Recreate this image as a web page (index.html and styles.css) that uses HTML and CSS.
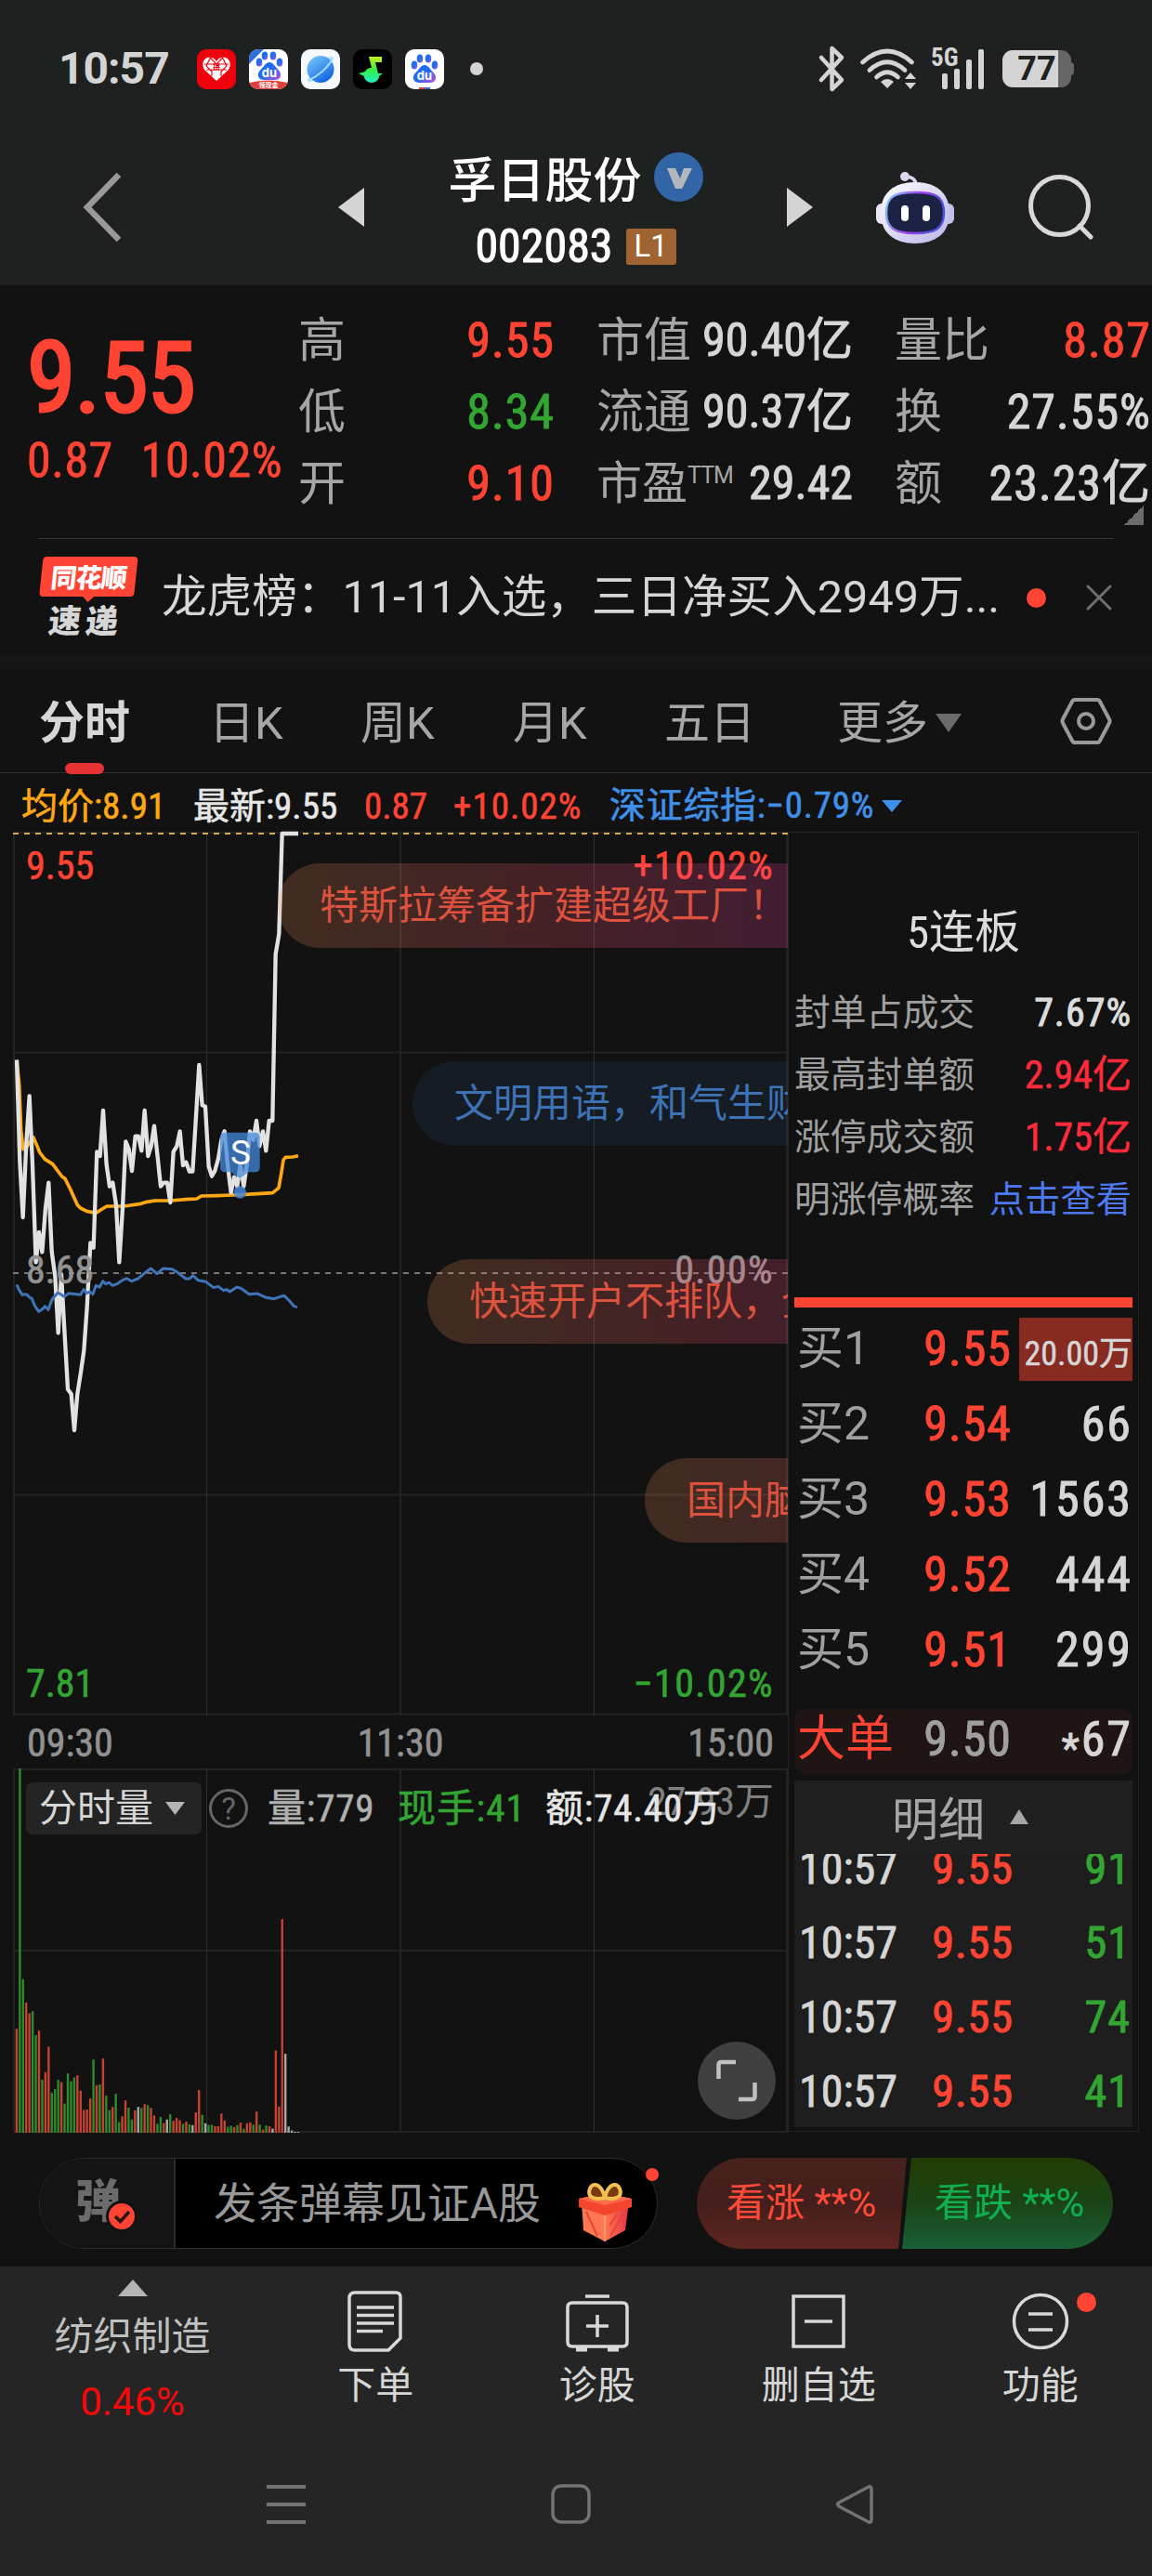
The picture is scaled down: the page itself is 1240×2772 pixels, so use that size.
FILE: index.html
```html
<!DOCTYPE html>
<html lang="zh-CN">
<head>
  <meta charset="UTF-8">
  <meta name="viewport" content="width=device-width, initial-scale=1.0">
  <title>孚日股份 002083</title>
  <link rel="stylesheet" href="styles.css">
</head>
<body>
  <svg class="defs" width="0" height="0">
    <defs>
      <linearGradient id="paw" x1="0" y1="0" x2="1" y2="1">
        <stop offset="0.5" stop-color="#1f6cf0"/>
        <stop offset="1" stop-color="#c34ddc"/>
      </linearGradient>
      <linearGradient id="planet" x1="0" y1="0" x2="0.7" y2="1">
        <stop offset="0" stop-color="#7fd0ff"/>
        <stop offset="1" stop-color="#0f62e0"/>
      </linearGradient>
      <linearGradient id="note" x1="0" y1="0" x2="0" y2="1">
        <stop offset="0" stop-color="#c6f01c"/>
        <stop offset="0.5" stop-color="#38f03c"/>
        <stop offset="1" stop-color="#19f0c8"/>
      </linearGradient>
      <linearGradient id="robotHead" x1="0" y1="0" x2="1" y2="1">
        <stop offset="0" stop-color="#ffffff"/>
        <stop offset="1" stop-color="#b9b4e6"/>
      </linearGradient>
      <linearGradient id="robotRim" x1="0" y1="0" x2="1" y2="0.3">
        <stop offset="0" stop-color="#7fd4f5"/>
        <stop offset="0.6" stop-color="#a03df0"/>
        <stop offset="1" stop-color="#4a52e0"/>
      </linearGradient>
      <linearGradient id="giftBox" x1="0" y1="0" x2="1" y2="0">
        <stop offset="0" stop-color="#ff7a4c"/>
        <stop offset="1" stop-color="#e8304a"/>
      </linearGradient>
      <symbol id="pawShape" viewBox="0 0 42 42">
        <g fill="url(#paw)">
          <ellipse cx="10" cy="17" rx="3.3" ry="4.5"/>
          <ellipse cx="16" cy="10" rx="3.3" ry="4.6"/>
          <ellipse cx="25" cy="10" rx="3.3" ry="4.6"/>
          <ellipse cx="32" cy="17" rx="3.3" ry="4.5"/>
          <path d="M21 17c4 0 5.500 4 8.500 7 3 3 4.500 5.500 3 9-1.500 3.500-6 3-11.500 3s-10 .5-11.500-3c-1.500-3.500 0-6 3-9 3-3 4.500-7 8.500-7z"/>
        </g>
        <text x="21" y="33" text-anchor="middle" class="du">du</text>
      </symbol>
    </defs>
  </svg>

  <div class="statusbar">
    <span class="clock">10:57</span>
    <div class="apps">
      <svg width="42" height="43" viewBox="0 0 42 43">
        <rect width="42" height="43" rx="10" fill="#f0000c"/>
        <path d="M21 34L8 22c-3-5-2-11 3-13 4-1 8 0 10 4 2-4 6-5 10-4 5 2 6 8 3 13z" fill="#fff"/>
        <path d="M8 16l26 0M10 22l22 0M14 10l-4 8 6 6 0 5M28 10l4 8-6 6 0 5M14 9l7 7 7-7" fill="none" stroke="#f0000c" stroke-width="1.200"/>
        <text x="21" y="22" text-anchor="middle" class="mini-red">拼</text>
      </svg>
      <svg width="42" height="43" viewBox="0 0 42 43">
        <defs><clipPath id="clipA"><rect width="42" height="43" rx="10"/></clipPath></defs>
        <g clip-path="url(#clipA)">
          <rect width="42" height="43" fill="#fff"/>
          <use href="#pawShape" x="1" y="-3" width="42" height="42"/>
          <path d="M0 0h16L0 16z" fill="#2f6fe0"/>
          <path d="M0 36q21-5 42 0v8H0z" fill="#e2403c"/>
          <text x="21" y="41" text-anchor="middle" class="mini-white">领现金</text>
        </g>
      </svg>
      <svg width="42" height="43" viewBox="0 0 42 43">
        <rect width="42" height="43" rx="10" fill="#f6f9fc"/>
        <ellipse cx="21" cy="21.500" rx="19" ry="5" transform="rotate(-45 21 21.500)" fill="#b9e4fb"/>
        <circle cx="21" cy="21.500" r="14.500" fill="url(#planet)"/>
        <path d="M9 33C18 29 29 20 34 10" stroke="#9fdcff" stroke-width="2" fill="none"/>
      </svg>
      <svg width="42" height="43" viewBox="0 0 42 43">
        <rect width="42" height="43" rx="10" fill="#000"/>
        <path d="M17 8h14v6h-7l3 12 5 0-4 3c0 4-4 7-8 7s-8-3-8-7l-6-3 7-2c1-2 3-4 7-4z" fill="url(#note)"/>
      </svg>
      <svg width="42" height="43" viewBox="0 0 42 43">
        <rect width="42" height="43" rx="10" fill="#fff"/>
        <use href="#pawShape" width="42" height="42"/>
        <rect x="15" y="41" width="6" height="2" fill="#e03c3c"/>
        <rect x="21" y="41" width="6" height="2" fill="#2f6fe0"/>
      </svg>
    </div>
    <i class="more-dot"></i>
    <div class="signals">
      <svg width="27" height="52" viewBox="0 0 27 52"><path d="M2 14l22 24-10.500 10V4L24 14 2 38" fill="none" stroke="#d4d4d4" stroke-width="4.500" stroke-linejoin="round" stroke-linecap="round"/></svg>
      <svg width="60" height="44" viewBox="0 0 60 44">
        <g fill="none" stroke="#d4d4d4" stroke-width="4.800" stroke-linecap="round">
          <path d="M2.500 15Q29 -9 55.500 15"/>
          <path d="M10 23.500Q29 6 48 23.500"/>
          <path d="M17.500 31Q29 20.500 40.500 31"/>
        </g>
        <path d="M22 36q7-6 14 0l-7 7z" fill="#d4d4d4"/>
        <path d="M54 26l6 7H48zM54 44l6-7H48z" fill="#d4d4d4"/>
      </svg>
      <svg width="57" height="44" viewBox="0 0 57 44">
        <text x="-1" y="19" class="net">5G</text>
        <g fill="#d4d4d4">
          <rect x="11" y="27" width="6" height="17" rx="2"/>
          <rect x="24" y="22" width="6" height="22" rx="2"/>
          <rect x="37" y="12" width="6" height="32" rx="2"/>
          <rect x="50" y="1" width="6" height="43" rx="2"/>
        </g>
      </svg>
      <div class="battery">77</div>
    </div>
  </div>

  <header class="header">
    <svg class="back" width="42" height="76" viewBox="0 0 42 76"><path d="M38 3L4 38l34 35" fill="none" stroke="#999" stroke-width="6.500"/></svg>
    <svg class="prev" width="28" height="42"><path d="M28 0v42L0 21z" fill="#d4d4d4"/></svg>
    <div class="stock">
      <div class="stock-name">孚日股份
        <svg width="53" height="53" viewBox="0 0 53 53"><circle cx="26.500" cy="26.500" r="26.500" fill="#3265a8"/><path d="M14 17h9l5 11 4-11h9L30 39h-7z" fill="#b4b8bc"/></svg>
      </div>
      <div class="stock-code">002083<span class="level">L1</span></div>
    </div>
    <svg class="next" width="28" height="42"><path d="M0 0v42L28 21z" fill="#d4d4d4"/></svg>
    <svg class="robot" width="84" height="77" viewBox="0 0 84 77">
      <path d="M31 5q12 0 12 10" fill="none" stroke="#dcd8f2" stroke-width="3.500"/>
      <circle cx="31" cy="5" r="5" fill="#dcd8f2"/>
      <rect x="0" y="34" width="14" height="22" rx="6" fill="#e9e6fa"/>
      <rect x="70" y="34" width="14" height="22" rx="6" fill="#c3bfea"/>
      <path d="M42 11c22 0 37 11 37 33S64 77 42 77 5 66 5 44s15-33 37-33z" fill="url(#robotHead)"/>
      <path d="M42 22c22 0 31 4 31 22S62 66 42 66 11 62 11 44s9-22 31-22z" fill="#1c2244" stroke="url(#robotRim)" stroke-width="2.500"/>
      <rect x="27" y="36" width="8" height="17" rx="4" fill="#fff"/>
      <rect x="50" y="36" width="8" height="17" rx="4" fill="#fff"/>
    </svg>
    <svg class="search" width="70" height="70" viewBox="0 0 70 70"><circle cx="33.500" cy="33.500" r="31" fill="none" stroke="#d8d8d8" stroke-width="5"/><path d="M55 55l12 12" stroke="#d8d8d8" stroke-width="5" stroke-linecap="round"/></svg>
  </header>

  <section class="quote">
    <div class="quote-main">
      <div class="price">9.55</div>
      <div class="change"><span>0.87</span><span>10.02%</span></div>
    </div>
    <ul class="quote-col">
      <li>高<b class="up">9.55</b></li>
      <li>低<b class="down">8.34</b></li>
      <li>开<b class="up">9.10</b></li>
    </ul>
    <ul class="quote-col worth">
      <li>市值<b>90.40亿</b></li>
      <li>流通<b>90.37亿</b></li>
      <li><span>市盈<sup>TTM</sup></span><b>29.42</b></li>
    </ul>
    <ul class="quote-col">
      <li>量比<b class="up">8.87</b></li>
      <li>换<b>27.55%</b></li>
      <li>额<b>23.23亿</b></li>
    </ul>
    <i class="corner"></i>
  </section>

  <section class="news">
    <div class="news-logo"><span class="bubble">同花顺</span><span class="express">速递</span></div>
    <p>龙虎榜：11-11入选，三日净买入2949万...</p>
    <i class="dot"></i>
    <svg width="28" height="28" viewBox="0 0 28 28"><path d="M2 2l24 24M26 2L2 26" stroke="#707070" stroke-width="3" stroke-linecap="round"/></svg>
  </section>

  <nav class="tabs">
    <span class="active">分时</span>
    <span>日K</span>
    <span>周K</span>
    <span>月K</span>
    <span>五日</span>
    <span>更多<svg width="28" height="22"><path d="M0 0h28L14 20z" fill="#6b6b6b"/></svg></span>
    <svg width="56" height="52" viewBox="0 0 56 52"><path d="M16 3h24q2 0 3 2l10 19q1 2 0 4L43 47q-1 2-3 2H16q-2 0-3-2L3 28q-1-2 0-4L13 5q1-2 3-2z" fill="none" stroke="#999" stroke-width="4"/><circle cx="28" cy="26" r="8" fill="none" stroke="#999" stroke-width="4"/></svg>
  </nav>

  <div class="legend">
    <span class="avg">均价:8.91</span>
    <span class="last">最新:9.55</span>
    <span class="up">0.87</span>
    <span class="up">+10.02%</span>
    <span class="index">深证综指:−0.79%<svg width="22" height="13"><path d="M0 0h22L11 13z" fill="#4090e8"/></svg></span>
  </div>

  <main class="board">
    <div class="charts">
      <div class="chart">
        <svg width="834" height="951" viewBox="0 0 834 951">
          <path class="grid" d="M1 1H834M1 0V951M833 0V951M417 0V951M0 237.500H834M0 713.500H834M0 949.500H834"/>
          <path class="grid thin" d="M208.500 0V951M625.500 0V951"/>
          <path d="M0 475H834" stroke="#999" stroke-width="1.500" stroke-dasharray="6 6"/>
          <path d="M0 2H834" stroke="#d6a963" stroke-width="2" stroke-dasharray="6 6"/>
          <g transform="translate(-14 225) scale(0.33333)" fill="none" stroke-linejoin="round">
            <polyline stroke="#ffa812" stroke-width="11" points="54,62 62,140 68,290 75,350 85,345 95,328 108,312 118,335 128,360 145,382 170,398 200,438 210,445 230,485 250,530 260,540 280,550 310,556 330,543 345,534 400,534 450,527 475,520 500,516 550,516 600,512 635,510 650,501 700,500 750,498 830,494 880,491 900,475 908,430 915,385 922,376 945,375 963,371"/>
            <polyline stroke="#e2e2e2" stroke-width="13" points="54,62 64,390 74,570 85,330 95,178 105,400 116,715 126,618 136,682 147,540 157,458 167,680 178,760 188,943 198,755 209,950 219,1125 230,1140 240,1257 250,1140 261,1070 271,1000 281,860 292,652 302,668 313,358 323,372 333,225 344,400 354,470 364,458 375,530 385,715 396,540 406,325 416,350 426,420 437,308 447,308 457,355 467,225 478,372 488,340 498,275 509,375 519,470 529,458 540,458 550,522 560,358 571,340 581,292 591,402 601,392 612,422 622,422 632,260 643,78 653,208 663,212 674,405 684,437 694,420 705,380 715,320 725,292 735,400 746,490 756,440 766,470 776,400 787,470 797,400 807,292 818,320 828,258 838,340 849,292 859,355 869,258 880,258 890,-279 901,-345 911,-669 963,-669"/>
            <polyline stroke="#3f74b8" stroke-width="9" points="54,787 62,805 72,820 85,818 95,828 103,832 112,855 125,874 137,866 145,857 156,868 168,835 187,813 208,826 222,815 260,820 270,803 280,815 290,810 300,818 310,790 322,795 332,776 342,785 352,780 363,790 380,784 395,773 410,767 425,776 445,768 465,752 487,735 507,752 527,735 555,737 570,745 585,757 600,768 612,768 623,758 640,773 665,778 690,797 705,793 722,806 732,803 742,810 765,795 780,800 805,818 830,816 860,829 885,833 905,826 918,823 935,840 950,857 960,860"/>
            <rect x="711" y="296" width="128" height="128" rx="14" fill="#4488dc" fill-opacity="0.75"/>
            <path d="M745 424h58l-28 20z" fill="#4488dc" fill-opacity="0.75"/>
            <circle cx="775" cy="489" r="20" fill="#4488dc" fill-opacity="0.85"/>
          </g>
          <text x="245" y="358" text-anchor="middle" class="mark">S</text>
        </svg>
        <span class="axis top left up">9.55</span>
        <span class="axis top right up">+10.02%</span>
        <span class="axis mid left">8.68</span>
        <span class="axis mid right">0.00%</span>
        <span class="axis bottom left down">7.81</span>
        <span class="axis bottom right down">−10.02%</span>
        <div class="danmaku">
          <span class="warm first">特斯拉筹备扩建超级工厂！</span>
          <span class="cool second">文明用语，和气生财</span>
          <span class="warm third">快速开户不排队，全程</span>
          <span class="warm fourth">国内脑机</span>
        </div>
      </div>
      <div class="times"><span>09:30</span><span>11:30</span><span>15:00</span></div>
      <div class="volume">
        <svg width="834" height="392" viewBox="0 0 834 392">
          <path class="grid" d="M0 1H834M1 0V391M833 0V391M417 0V391M0 196H834M0 391H834"/>
          <path class="grid thin" d="M208.500 0V391M625.500 0V391"/>
          <g id="bars"></g>
        </svg>
        <span class="vol-max">27.93万</span>
        <div class="vol-head">
          <span class="chip">分时量<svg width="21" height="14"><path d="M0 0h21L10.500 14z" fill="#b4b4b4"/></svg></span>
          <span class="help">?</span>
          <span class="vol">量:779</span>
          <span class="hand down">现手:41</span>
          <span class="amount">额:74.40万</span>
        </div>
        <div class="expand"><svg width="44" height="44" viewBox="0 0 44 44" fill="none" stroke="#c0c0c0" stroke-width="4.500"><path d="M2.500 20V5q0-3 3-3H21M41.500 24v15q0 3-3 3H24"/></svg></div>
      </div>
    </div>

    <aside class="panel">
      <h2>5连板</h2>
      <ul class="limit">
        <li>封单占成交<b>7.67%</b></li>
        <li>最高封单额<b class="red">2.94亿</b></li>
        <li>涨停成交额<b class="red">1.75亿</b></li>
        <li>明涨停概率<a>点击查看</a></li>
      </ul>
      <ul class="bids">
        <li><span>买1</span><b>9.55</b><em class="hot">20.00万</em></li>
        <li><span>买2</span><b>9.54</b><em>66</em></li>
        <li><span>买3</span><b>9.53</b><em>1563</em></li>
        <li><span>买4</span><b>9.52</b><em>444</em></li>
        <li><span>买5</span><b>9.51</b><em>299</em></li>
      </ul>
      <div class="big-order"><span>大单</span><b>9.50</b><em><small>*</small>67</em></div>
      <div class="detail-head">明细<svg width="20" height="16"><path d="M0 16h20L10 0z" fill="#a6a6a6"/></svg></div>
      <ul class="ticks">
        <li><span>10:57</span><b>9.55</b><em>91</em></li>
        <li><span>10:57</span><b>9.55</b><em>51</em></li>
        <li><span>10:57</span><b>9.55</b><em>74</em></li>
        <li><span>10:57</span><b>9.55</b><em>41</em></li>
      </ul>
    </aside>
  </main>

  <div class="actions">
    <div class="comment">
      <div class="toggle">弹<svg width="34" height="34" viewBox="0 0 34 34"><circle cx="17" cy="17" r="15.500" fill="#ff4433" stroke="#121212" stroke-width="3"/><path d="M10 17l5.500 5.500L25 12" fill="none" stroke="#2a1412" stroke-width="3.500"/></svg></div>
      <div class="input">发条弹幕见证A股
        <svg width="57" height="64" viewBox="0 0 57 64">
          <path d="M3 20l25 10v33L5 51z" fill="#ff7850"/>
          <path d="M54 20L28 30v33l22-12z" fill="url(#giftBox)"/>
          <path d="M0 17l28-6 29 6v9L28 35 0 26z" fill="#f4452f"/>
          <path d="M0 17l28-6 29 6-29 7z" fill="#ff6a4a"/>
          <path d="M28 16C14 19 9 14 12 6c4-8 13-4 16 10 3-14 12-18 16-10 3 8-2 13-16 10z" fill="#7a3a10" stroke="#f2c050" stroke-width="4"/>
          <path d="M28 35v28" stroke="#ffa07c" stroke-width="1.500"/>
          <path d="M8 31l12 26M34 57l14-24M33 46l8-12" stroke="#e8443c" stroke-width="2"/>
        </svg>
      </div>
      <i class="badge"></i>
    </div>
    <div class="vote">
      <span class="bull">看涨 **%</span>
      <span class="bear">看跌 **%</span>
    </div>
  </div>

  <footer class="toolbar">
    <div class="sector">
      <svg width="32" height="18"><path d="M0 18h32L16 0z" fill="#b4b4b4"/></svg>
      <span>纺织制造</span>
      <em>0.46%</em>
    </div>
    <div class="tool">
      <svg width="70" height="66" viewBox="0 0 70 66" fill="none" stroke="#d8d8d8" stroke-width="3.500"><path d="M13 2h44q5 0 5 5v44L49 64H13q-6 0-6-6V8q0-6 6-6z"/><path d="M15 18h40M15 26.500h40M15 35h40M15 43.500h28"/></svg>
      <span>下单</span>
    </div>
    <div class="tool">
      <svg width="70" height="66" viewBox="0 0 70 66" fill="none" stroke="#d8d8d8" stroke-width="3.500"><path d="M22 6h26M8 13h54q5 0 5 5v37q0 5-5 5H8q-5 0-5-5V18q0-5 5-5zM35 26v24M23 38h24"/><path d="M12 63h12M46 63h12" stroke-width="5"/></svg>
      <span>诊股</span>
    </div>
    <div class="tool">
      <svg width="70" height="66" viewBox="0 0 70 66" fill="none" stroke="#d8d8d8" stroke-width="3.500"><path d="M8 6h54v54H8zM20 33h30"/></svg>
      <span>删自选</span>
    </div>
    <div class="tool">
      <svg width="70" height="66" viewBox="0 0 70 66" fill="none" stroke="#d8d8d8" stroke-width="3.500"><circle cx="35" cy="33" r="28.500"/><path d="M22 25h26M22 42h26"/></svg>
      <span>功能</span>
      <i class="dot"></i>
    </div>
  </footer>

  <div class="sysnav">
    <svg width="42" height="44" viewBox="0 0 42 44"><path d="M0 3h42M0 22h42M0 41h42" stroke="#737373" stroke-width="4"/></svg>
    <svg width="44" height="44" viewBox="0 0 44 44"><rect x="2" y="2" width="39" height="39" rx="9" fill="none" stroke="#737373" stroke-width="3.500"/></svg>
    <svg width="42" height="44" viewBox="0 0 42 44"><path d="M36 3q3-1 3 3v32q0 4-3 3L4 24q-3-2 0-4z" fill="none" stroke="#737373" stroke-width="3.500"/></svg>
  </div>

  <script>
    // one bar per minute since 09:30: colour + height
    const volumes = ('r331 g1160 g489 r414 r380 g387 g311 r325 g169 r193 r274 g128 g139 g168 r161 g93 g189 g164 g176 r183 ' +
      'r134 r72 r74 r109 g233 r151 g154 r236 g118 g72 r82 g124 g34 r52 r103 g80 g42 r71 w82 g79 r91 g88 r79 r55 ' +
      'g28 g50 r31 w42 g59 r38 r47 r40 g28 r35 g27 w24 r65 r136 g57 w30 g25 g25 r21 r21 r61 r39 g19 g22 r18 g24 ' +
      'r32 g13 r30 r33 g26 r67 g26 r10 g23 r21 w13 r262 r83 r680 w251 w20 w7 w3 w3').split(' ');
    const fills = { r: '#c8422f', g: '#2f8a2b', w: '#a8a8a8' };
    const bars = document.getElementById('bars');

    volumes.forEach((item, i) => {
      const h = Number(item.slice(1)) * 0.338;
      const rect = document.createElementNS('http://www.w3.org/2000/svg', 'rect');
      rect.setAttribute('x', (2.7 + i * 3.444).toFixed(2));
      rect.setAttribute('y', (392 - h).toFixed(2));
      rect.setAttribute('width', 2.4);
      rect.setAttribute('height', h.toFixed(2));
      rect.setAttribute('fill', fills[item[0]]);
      bars.appendChild(rect);
    });
  </script>
</body>
</html>
```
FILE: styles.css
```css
* {
  box-sizing: border-box;
}

body {
  margin: 0;
  width: 1240px;
  height: 2772px;
  overflow: hidden;
  background: #121212;
  color: #d6d6d6;
  font-family: 'Roboto Condensed', 'Noto Sans CJK SC', sans-serif;
  font-size: 52px;
  white-space: nowrap;
}

ul, p, h2 {
  margin: 0;
  padding: 0;
  list-style: none;
}

b, em, h2 {
  font-weight: 400;
  font-style: normal;
}

b, em {
  letter-spacing: 1px;
  -webkit-text-stroke: 1px;
}

svg {
  display: block;
  flex-shrink: 0;
  overflow: visible;
}

.defs {
  position: absolute;
}

.up { color: #ff4433 !important; }
.down { color: #32a532 !important; }

.dot {
  width: 21px;
  height: 21px;
  border-radius: 50%;
  background: #ff4433;
}

/* status bar */
.statusbar {
  height: 148px;
  padding-left: 63px;
  display: flex;
  align-items: center;
  background: #1f2120;
  color: #d4d4d4;
}

.clock {
  width: 149px;
  font: 700 48px/1 Roboto, sans-serif;
  letter-spacing: -1px;
}

.apps {
  display: flex;
  gap: 14px;
}

.du {
  font: 700 13px Inter, sans-serif;
  fill: #fff;
}

.mini-red {
  font: 700 8px 'Noto Sans CJK SC', sans-serif;
  fill: #f0000c;
}

.mini-white {
  font: 700 7px 'Noto Sans CJK SC', sans-serif;
  fill: #fff;
}

.more-dot {
  width: 14px;
  height: 14px;
  margin-left: 28px;
  border-radius: 50%;
  background: #d4d4d4;
}

.signals {
  margin-left: 362px;
  display: flex;
  align-items: center;
}

.signals svg {
  margin-right: 17px;
}

.net {
  font: 700 27px 'Roboto Condensed', sans-serif;
  fill: #d4d4d4;
}

.signals svg:nth-child(3) {
  margin-right: 19px;
}

.battery {
  width: 74px;
  height: 40px;
  border-radius: 11px;
  background: linear-gradient(90deg, #d4d4d4 60px, #666 60px);
  color: #1f2120;
  font: 700 36px/41px Roboto, sans-serif;
  text-align: center;
  position: relative;
}

.battery::after {
  content: "";
  position: absolute;
  right: -3px;
  top: 13px;
  width: 4px;
  height: 14px;
  border-radius: 0 4px 4px 0;
  background: #666;
}

/* header */
.header {
  height: 159px;
  padding: 0 0 9px 90px;
  display: flex;
  align-items: center;
  background: #1f2120;
  color: #fff;
}

.prev {
  margin-left: 232px;
}

.stock {
  width: 455px;
  padding-top: 9px;
}

.stock-name, .stock-code {
  height: 75px;
  display: flex;
  align-items: center;
  justify-content: center;
}

.stock-name {
  font-weight: 500;
  gap: 13px;
}

.stock-code {
  font-size: 50px;
  -webkit-text-stroke: 1px;
}

.level {
  width: 54px;
  height: 39px;
  margin-left: 14px;
  border-radius: 3px;
  background: #a06433;
  font: 33px/38px Roboto, sans-serif;
  text-align: center;
  -webkit-text-stroke: 0;
}

.robot {
  margin-left: 68px;
}

.search {
  margin-left: 80px;
}

/* quote */
.quote {
  height: 273px;
  padding-top: 21px;
  display: flex;
  gap: 46px;
  position: relative;
}

.quote::after {
  content: "";
  position: absolute;
  left: 42px;
  right: 42px;
  bottom: 0;
  height: 1px;
  background: #363636;
}

.quote-main {
  width: 275px;
  padding-left: 29px;
  color: #ff4433;
}

.price {
  height: 117px;
  margin-top: 21px;
  font-size: 106px;
  line-height: 117px;
  letter-spacing: -1px;
  -webkit-text-stroke: 3px;
}

.change {
  height: 58px;
  line-height: 59px;
  display: flex;
  gap: 30px;
  letter-spacing: 0.500px;
  -webkit-text-stroke: 0.800px;
}

.quote-col {
  width: 276px;
  margin-right: -1px;
}

.quote-col li {
  height: 77px;
  line-height: 77px;
  display: flex;
  justify-content: space-between;
  font-size: 51px;
  color: #a6a6a6;
}

.quote-col b {
  font-size: 52px;
  color: #d6d6d6;
}

.worth b {
  font-size: 50px;
  letter-spacing: 0;
}

.quote-col sup {
  display: inline-block;
  font: 25px/1 Roboto, sans-serif;
  letter-spacing: -1px;
  vertical-align: 17px;
}

.worth li:last-child span {
  font-size: 49px;
}

.corner {
  position: absolute;
  right: 9px;
  bottom: 15px;
  width: 21px;
  height: 21px;
  background: linear-gradient(135deg, transparent 50%, #6b6b6b 50%);
}

/* news */
.news {
  height: 140px;
  padding: 0 42px;
  display: flex;
  align-items: center;
  border-bottom: 14px solid #161616;
}

.news p {
  width: 910px;
  margin-left: 30px;
  font: 48.600px/60px Roboto, 'Noto Sans CJK SC', sans-serif;
}

.news .dot {
  margin: 0 43px 0 21px;
}

.news-logo {
  width: 102px;
  height: 88px;
  transform: skewX(-6deg);
}

.bubble {
  display: block;
  height: 43px;
  border-radius: 4px;
  background: #ff4433;
  color: #fff;
  font: 900 28px/42px 'Noto Sans CJK SC', sans-serif;
  text-align: center;
  letter-spacing: -1px;
}

.bubble::after {
  content: "";
  position: absolute;
  left: 46px;
  top: 42px;
  border: 7px solid transparent;
  border-top-color: #ff4433;
}

.express {
  display: block;
  padding-left: 13px;
  font: 900 35px/47px 'Noto Sans CJK SC', sans-serif;
  letter-spacing: 5px;
}

/* tabs */
.tabs {
  height: 112px;
  padding: 4px 0 0 42px;
  display: grid;
  grid-template-columns: 183px 163px 164px 163px 186px 240px 56px;
  align-items: center;
  border-bottom: 1px solid #2c2c2c;
  color: #a6a6a6;
  font: 49px/109px Roboto, 'Noto Sans CJK SC', sans-serif;
}

.tabs > svg {
  margin-top: -6px;
}

.tabs span {
  display: flex;
  align-items: center;
  gap: 8px;
}

.tabs .active {
  position: relative;
  color: #d6d6d6;
  font-weight: 700;
}

.tabs .active::after {
  content: "";
  position: absolute;
  left: 28px;
  bottom: 0;
  width: 42px;
  height: 12px;
  border-radius: 6px;
  background: #e63232;
}

/* legend */
.legend {
  height: 63px;
  padding: 4px 0 0 23px;
  display: flex;
  font-size: 39px;
  line-height: 65px;
  -webkit-text-stroke: 0.600px;
}

.legend .avg { width: 185px; color: #ffa812; }
.legend .last { width: 184px; color: #e6e6e6; }
.legend .up:nth-child(3) { width: 96px; }
.legend .up:nth-child(4) { width: 168px; letter-spacing: 1px; }

.legend .index {
  height: 63px;
  display: flex;
  align-items: center;
  gap: 8px;
  color: #4090e8;
  letter-spacing: 0.700px;
}

/* board */
.board {
  display: flex;
  padding-left: 14px;
  height: 1400px;
}

.charts {
  width: 834px;
}

.grid {
  fill: none;
  stroke: #232323;
  stroke-width: 2;
}

.thin {
  stroke: #303030;
  stroke-width: 1;
}

.chart {
  height: 951px;
  position: relative;
}

.mark {
  font: 37px Roboto, sans-serif;
  fill: #fff;
}

.axis {
  position: absolute;
  font-size: 42px;
  line-height: 50px;
  color: #929292;
  -webkit-text-stroke: 0.600px;
}

.axis.top { top: 12px; }
.axis.mid { top: 447px; }
.axis.bottom { top: 892px; }
.axis.left { left: 14px; }
.axis.right { right: 15px; letter-spacing: 1.400px; }

.danmaku {
  position: absolute;
  inset: 0;
  overflow: hidden;
}

.danmaku span {
  position: absolute;
  height: 91px;
  padding: 0 45px;
  border-radius: 46px;
  font-size: 42px;
  line-height: 92px;
}

.danmaku .warm {
  width: 640px;
  background: linear-gradient(90deg, rgba(255, 150, 90, 0.200), rgba(255, 90, 110, 0.210) 45%, rgba(255, 70, 200, 0.200));
  color: #dc523e;
}

.danmaku .cool {
  background: rgba(60, 120, 200, 0.100);
  color: #3d72b4;
}

.first { left: 285px; top: 34px; }
.second { left: 430px; top: 247px; }
.third { left: 446px; top: 460px; }
.fourth { left: 680px; top: 674px; }

.times {
  height: 57px;
  padding: 0 15px;
  display: flex;
  justify-content: space-between;
  font-size: 42px;
  line-height: 60px;
  color: #929292;
  -webkit-text-stroke: 0.600px;
}

.volume {
  height: 392px;
  position: relative;
}

.vol-max {
  position: absolute;
  right: 15px;
  top: 11px;
  font-size: 42px;
  line-height: 50px;
  color: #808080;
}

.vol-head {
  position: absolute;
  left: 14px;
  top: 14px;
  display: flex;
  align-items: center;
  font-size: 41px;
  line-height: 58px;
  -webkit-text-stroke: 0.600px;
}

.chip {
  width: 189px;
  height: 56px;
  padding-left: 14px;
  display: flex;
  align-items: center;
  gap: 13px;
  border-radius: 7px;
  background: #242424;
  -webkit-text-stroke: 0;
}

.help {
  width: 42px;
  height: 42px;
  margin: 0 21px 0 8px;
  border: 3px solid #666;
  border-radius: 50%;
  color: #666;
  font: 33px/37px Roboto, sans-serif;
  text-align: center;
  -webkit-text-stroke: 0;
}

.vol { width: 140px; color: #b0b0b0; letter-spacing: 0.800px; }
.hand { width: 159px; letter-spacing: 1.200px; }
.amount { color: #e6e6e6; letter-spacing: 0.800px; }

.expand {
  position: absolute;
  right: 13px;
  top: 294px;
  width: 84px;
  height: 84px;
  display: flex;
  align-items: center;
  justify-content: center;
  border-radius: 50%;
  background: #404040;
}

/* right panel */
.panel {
  width: 378px;
  height: 1399px;
  padding: 0 6px;
  border: 1px solid #242424;
  overflow: hidden;
}

.panel h2 {
  height: 158px;
  padding-top: 74px;
  line-height: 68px;
  font-size: 49px;
  text-align: center;
  color: #dcdcdc;
}

.limit {
  height: 353px;
  border-bottom: 11px solid #ff4433;
}

.limit li {
  height: 67px;
  line-height: 72px;
  display: flex;
  justify-content: space-between;
  padding-right: 1px;
  font-size: 38.800px;
  color: #a0a0a0;
}

.limit b { font-size: 42px; color: #dcdcdc; }
.limit .red { color: #ff2b3b; letter-spacing: 0; -webkit-text-stroke: 0.500px; }
.limit a { font-size: 38.300px; color: #4d78f0; }

.bids {
  height: 432px;
  padding-top: 4px;
}

.bids li, .big-order {
  height: 81px;
  line-height: 81px;
  display: grid;
  grid-template-columns: 129px 102px 130px;
  align-items: center;
  padding-left: 3px;
  color: #a0a0a0;
}

.bids span {
  font: 50px/81px Roboto, 'Noto Sans CJK SC', sans-serif;
}

.bids b, .big-order b, .ticks b {
  text-align: right;
}

.bids b { color: #ff4433; }

.bids em, .big-order em {
  text-align: right;
  letter-spacing: 2px;
  color: #d6d6d6;
}

.bids .hot {
  width: 122px;
  height: 68px;
  margin-left: 8px;
  padding-top: 5px;
  background: #862a22;
  font-size: 36px;
  line-height: 68px;
  letter-spacing: 0;
  -webkit-text-stroke: 0.500px;
}

.big-order {
  height: 70px;
  line-height: 66px;
  margin-bottom: 7px;
  border-radius: 12px;
  background: #1f1514;
}

.big-order span, .big-order b, .big-order em {
  height: 70px;
}

.big-order span { color: #ff4433; }
.big-order small { font-size: 44px; line-height: 1; vertical-align: -8px; }

.detail-head {
  height: 79px;
  padding: 7px 0 0 105px;
  display: flex;
  align-items: center;
  gap: 27px;
  background: #202020;
  color: #a6a6a6;
  font-size: 50px;
  line-height: 72px;
}

.detail-head svg {
  margin-top: -8px;
}

.ticks {
  height: 294px;
  overflow: hidden;
  background: #1e1e1e;
}

.ticks li {
  height: 80px;
  line-height: 80px;
  display: grid;
  grid-template-columns: 130px 101px 126px;
  padding-left: 5px;
  font-size: 48px;
}

.ticks li:first-child { margin-top: -24px; }
.ticks span { -webkit-text-stroke: 0.800px; }
.ticks b { color: #ff4433; }
.ticks em { text-align: right; color: #32a532; }

/* comment and vote */
.actions {
  height: 144px;
  padding: 27px 42px 0;
  display: flex;
  justify-content: space-between;
}

.comment {
  width: 666px;
  height: 98px;
  display: flex;
  position: relative;
  border: 1px solid #2c2c2c;
  border-radius: 49px;
  background: #000;
}

.toggle {
  width: 146px;
  padding-left: 38px;
  position: relative;
  border-right: 2px solid #2c2c2c;
  border-radius: 49px 0 0 49px;
  background: #141414;
  color: #6b6b6b;
  font: 900 49px/84px 'Noto Sans CJK SC', sans-serif;
}

.toggle svg {
  position: absolute;
  left: 71px;
  top: 45px;
}

.input {
  flex: 1;
  padding-left: 41px;
  display: flex;
  align-items: center;
  gap: 41px;
  color: #999;
  font: 46px/96px Roboto, 'Noto Sans CJK SC', sans-serif;
}

.input svg {
  margin-top: 20px;
}

.badge {
  position: absolute;
  right: -2px;
  top: 10px;
  width: 14px;
  height: 14px;
  border-radius: 50%;
  background: #ff4433;
}

.vote {
  width: 448px;
  display: flex;
  height: 98px;
  border-radius: 49px;
  overflow: hidden;
  font: 42px/98px Roboto, 'Noto Sans CJK SC', sans-serif;
}

.bull {
  width: 226px;
  padding-left: 32px;
  background: linear-gradient(#48221d, #431f1b 50%, #602520);
  color: #ff4a3a;
  clip-path: polygon(0 0, 100% 0, 217px 100%, 0 100%);
}

.bear {
  flex: 1;
  margin-left: -5px;
  padding-left: 35px;
  background: linear-gradient(#223d02, #1b4417 50%, #196036);
  color: #10ae50;
  clip-path: polygon(10px 0, 100% 0, 100% 100%, 0 100%);
}

/* bottom toolbar */
.toolbar {
  height: 181px;
  display: flex;
  background: #252525;
  font: 41px/60px Roboto, 'Noto Sans CJK SC', sans-serif;
}

.sector {
  width: 285px;
  padding-top: 14px;
  display: flex;
  flex-direction: column;
  align-items: center;
  color: #c0c0c0;
  font-size: 42px;
}

.sector span { margin-top: 14px; }

.sector em {
  margin-top: 10px;
  color: #f50a0a;
  letter-spacing: 0;
  -webkit-text-stroke: 0;
}

.tool {
  width: 238.500px;
  padding-top: 26px;
  position: relative;
  display: flex;
  flex-direction: column;
  align-items: center;
}

.tool span { margin-top: 6px; }

.tool .dot {
  position: absolute;
  left: 158px;
  top: 28px;
}

.sysnav {
  height: 152px;
  padding: 53px 0 0 287px;
  display: flex;
  background: #252525;
}

.sysnav svg:nth-child(2) { margin-left: 264px; }
.sysnav svg:nth-child(3) { margin-left: 262px; }
```
